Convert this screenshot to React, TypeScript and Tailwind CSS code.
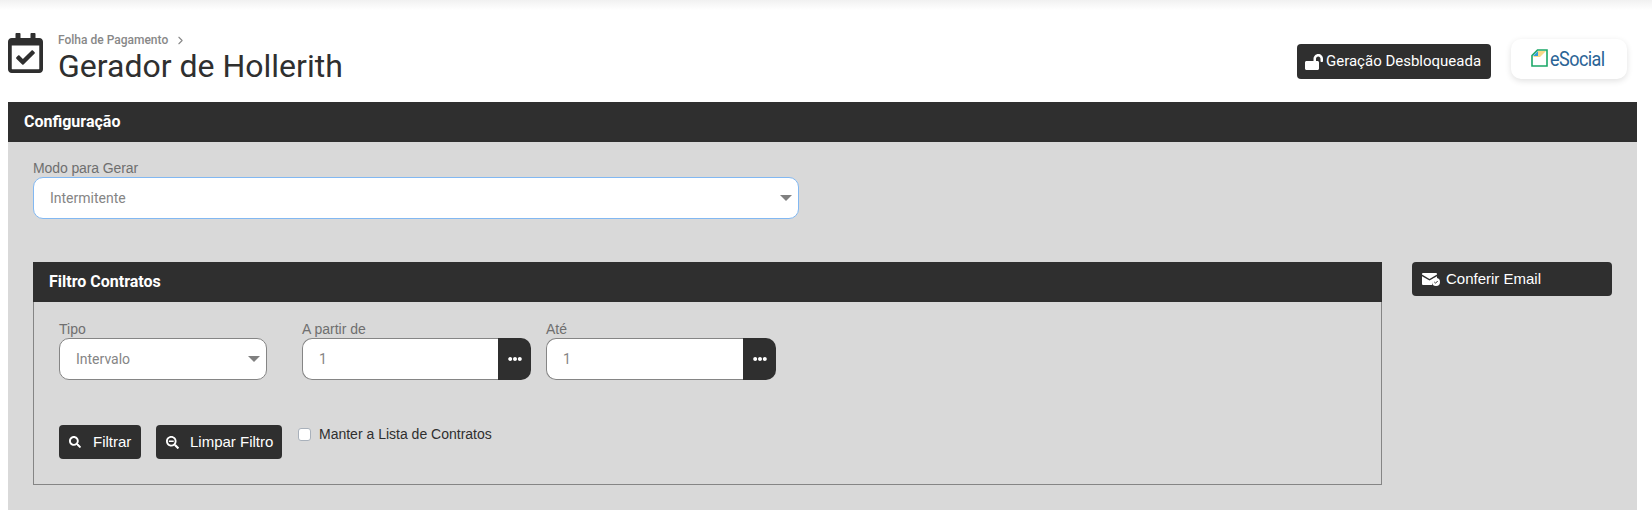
import { ChevronRight } from 'lucide-react';
import { FaEllipsisH, FaLockOpen, FaRegCalendarCheck, FaSearch, FaSearchMinus } from 'react-icons/fa';

const roboto = "font-['Roboto',sans-serif]";
const arial = "font-['Liberation_Sans',Arial,sans-serif]";

function SelectBox({ value, className }: { value: string; className: string }) {
  return (
    <div className={`flex items-center justify-between h-[42px] bg-white rounded-[10px] pl-4 pr-[6px] ${className}`}>
      <span className={`${roboto} text-sm text-[#858585]`}>{value}</span>
      <span className="w-0 h-0 border-x-[6px] border-x-transparent border-t-[6px] border-t-[#808080]" />
    </div>
  );
}

function LookupField({ label, width }: { label: string; width: string }) {
  return (
    <div className={width}>
      <div className={`${arial} text-sm leading-4 text-[#6f6f6f] mb-[1px]`}>{label}</div>
      <div className="flex h-[42px]">
        <div className={`flex-1 flex items-center bg-white border border-[#858585] border-r-0 rounded-l-[10px] pl-4 ${roboto} text-sm text-[#858585]`}>
          1
        </div>
        <div className="w-[33px] flex items-center justify-center bg-[#2f2f2f] rounded-r-[10px] text-white">
          <FaEllipsisH size={14} />
        </div>
      </div>
    </div>
  );
}

function ActionButton({ icon, label, className }: { icon: React.ReactNode; label: string; className: string }) {
  return (
    <button className={`flex items-center h-[34px] pl-[10px] bg-[#2f2f2f] rounded-[4px] text-white ${arial} text-[15px] ${className}`}>
      <span className="w-[24px] flex">{icon}</span>
      {label}
    </button>
  );
}

function MailCheckIcon() {
  return (
    <svg width="18" height="13" viewBox="0 0 18 13" className="mr-[6px]">
      <path d="M1 0h13a1 1 0 0 1 1 1v.6L7.5 6 0 1.6V1a1 1 0 0 1 1-1z" fill="#fff" />
      <path d="M0 3.2 7.5 7.6 15 3.2V6a5 5 0 0 0-5 6H1a1 1 0 0 1-1-1z" fill="#fff" />
      <circle cx="14" cy="9" r="4" fill="#fff" />
      <path d="M12.3 9l1.2 1.2 2.2-2.2" fill="none" stroke="#2f2f2f" strokeWidth="1" />
    </svg>
  );
}

function ESocialLogo() {
  return (
    <div className="flex items-center ml-[5px]">
      <svg width="17" height="18" viewBox="0 0 17 18" className="mb-[2px] mr-[2px]">
        <path d="M1 6.5 6.5 1H16v16H1z" fill="#fff" stroke="#1ba868" strokeWidth="1.6" />
        <path d="M7 2h8L9 8H2z" fill="#f6d98a" />
        <path d="M7 2 2 7h5z" fill="#2f9fd8" />
      </svg>
      <span className={`${roboto} text-[20px] leading-none tracking-[-0.6px] text-[#2a6496] scale-x-90 origin-left w-[62px]`}>
        eSocial
      </span>
    </div>
  );
}

export default function App() {
  return (
    <div className="w-[1652px] h-[518px] bg-white overflow-hidden">
      <div className="h-[10px] bg-gradient-to-b from-[#f1f1f1] to-white" />

      <div className="ml-2 mr-[15px] mt-[23px] h-[69px] flex items-start">
        <FaRegCalendarCheck size={40} className="text-[#2f2f2f] w-[35px]" />
        <div className="ml-[15px] mt-[-1px]">
          <div className={`${roboto} flex items-center text-xs font-medium leading-[14px] mt-[1px] text-[#888888]`}>
            Folha de Pagamento
            <ChevronRight size={13} className="ml-[6px]" />
          </div>
          <h1 className={`${roboto} text-[32px] leading-[38px] text-[#2f2f2f]`}>Gerador de Hollerith</h1>
        </div>
        <div className="ml-auto flex items-start">
          <div className={`mt-[11px] h-[35px] w-[194px] flex items-center pl-2 bg-[#2f2f2f] rounded-[4px] text-white ${roboto} text-[15px]`}>
            <FaLockOpen size={18} className="mr-[3px]" />
            Geração Desbloqueada
          </div>
          <div className="ml-5 mt-[6px] mr-[10px] h-10 w-[116px] flex items-center justify-center bg-white rounded-[10px] shadow-[0_2px_6px_rgba(0,0,0,0.12)]">
            <ESocialLogo />
          </div>
        </div>
      </div>

      <div className="ml-2 mr-[15px] h-[408px] bg-[#d9d9d9]">
        <div className={`h-10 flex items-center pl-4 bg-[#2f2f2f] ${roboto} text-base font-bold text-white`}>
          Configuração
        </div>

        <div className="pl-[25px] pt-[18px]">
          <div className={`${arial} text-sm leading-4 tracking-[-0.1px] text-[#6f6f6f] mb-[1px]`}>Modo para Gerar</div>
          <SelectBox value="Intermitente" className="w-[766px] border border-[#82b8f2]" />
        </div>

        <div className="flex items-start pl-[25px] pt-[43px]">
          <div className="w-[1349px]">
            <div className={`h-10 flex items-center pl-4 bg-[#2f2f2f] ${roboto} text-base font-bold text-white`}>
              Filtro Contratos
            </div>
            <div className="h-[183px] border border-t-0 border-[#858585] pl-[25px] pt-[19px]">
              <div className="flex gap-[15px]">
                <div className="w-[208px] mr-[20px]">
                  <div className={`${arial} text-sm leading-4 text-[#6f6f6f] mb-[1px]`}>Tipo</div>
                  <SelectBox value="Intervalo" className="border border-[#858585]" />
                </div>
                <LookupField label="A partir de" width="w-[229px]" />
                <LookupField label="Até" width="w-[230px]" />
              </div>
              <div className="flex items-start mt-[45px]">
                <ActionButton icon={<FaSearch size={12} />} label="Filtrar" className="w-[82px]" />
                <ActionButton icon={<FaSearchMinus size={13} />} label="Limpar Filtro" className="w-[126px] ml-[15px]" />
                <label className={`flex items-center ml-4 mt-[1px] ${arial} text-sm leading-4 text-[#2f2f2f]`}>
                  <span className="w-[13px] h-[13px] bg-white border border-[#a9b1bb] rounded-[3px] mr-[8px]" />
                  Manter a Lista de Contratos
                </label>
              </div>
            </div>
          </div>

          <button className={`ml-[30px] w-[200px] h-[34px] flex items-center pl-[10px] bg-[#2f2f2f] rounded-[4px] text-white ${arial} text-[15px]`}>
            <MailCheckIcon />
            Conferir Email
          </button>
        </div>
      </div>
    </div>
  );
}
